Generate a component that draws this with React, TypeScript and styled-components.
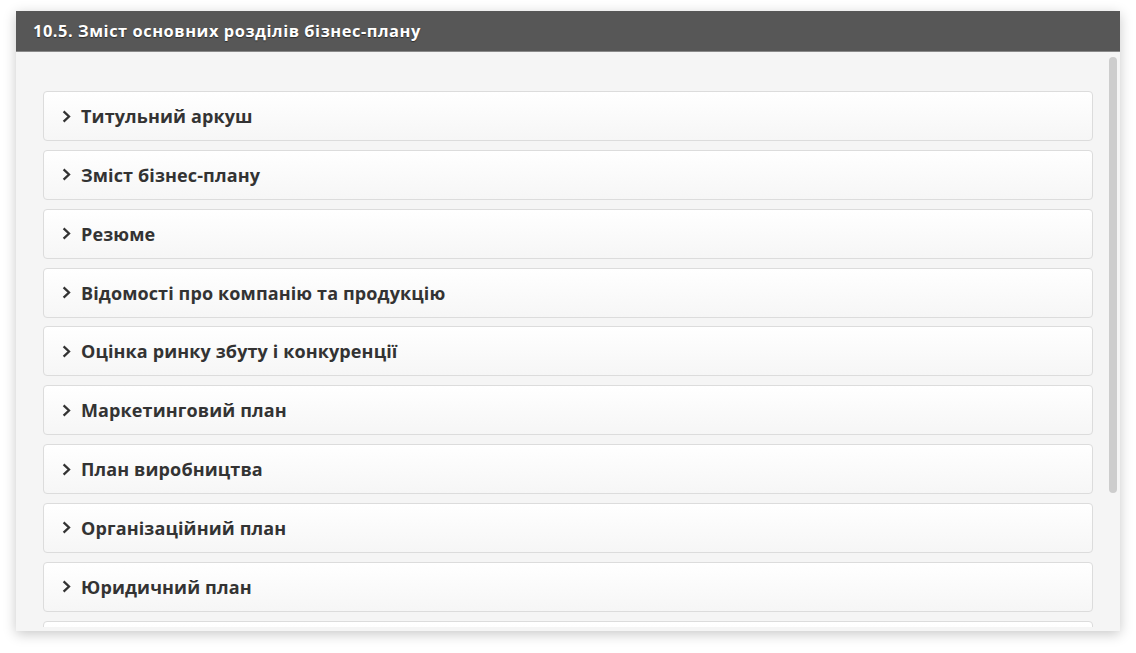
import React from "react";
import styled, { createGlobalStyle } from "styled-components";

const Global = createGlobalStyle`
  html, body { margin: 0; padding: 0; background: #ffffff; }
  body { font-family: "Open Sans", "Noto Sans", sans-serif; }
  * { box-sizing: border-box; }
`;

const Page = styled.div`
  width: 1136px;
  height: 653px;
  padding: 11px 16px 0 16px;
`;

const Panel = styled.section`
  width: 1104px;
  height: 620px;
  display: flex;
  flex-direction: column;
  background: #f5f5f5;
  box-shadow: 0 3px 12px rgba(0, 0, 0, 0.22);
`;

const Header = styled.header`
  height: 41px;
  flex: 0 0 41px;
  display: flex;
  align-items: center;
  padding: 0 17px 1px;
  background: #575757;
  border-bottom: 1px solid #8a8a8a;
  color: #ffffff;
  font-size: 16.4px;
  font-weight: 700;
  text-shadow: 0 1px 1px rgba(0, 0, 0, 0.5);
  letter-spacing: 0.55px;
  white-space: nowrap;
`;

const BodyFrame = styled.div`
  position: relative;
  flex: 1;
  min-height: 0;
  margin-bottom: 4px;
`;

const Body = styled.div`
  height: 100%;
  overflow-y: scroll;
  scrollbar-width: none;
  padding: 39px 27px 8px 27px;
  display: flex;
  flex-direction: column;
  gap: 8.85px;
  &::-webkit-scrollbar { display: none; }
`;

const Thumb = styled.div`
  position: absolute;
  top: 5px;
  right: 3px;
  width: 8px;
  height: 436px;
  border-radius: 4px;
  background: #cdcdcd;
`;

const Item = styled.div`
  flex: 0 0 50px;
  height: 50px;
  display: flex;
  align-items: center;
  gap: 10px;
  padding: 0 17px 0 18px;
  border: 1px solid #dcdcdc;
  border-radius: 4px;
  background: linear-gradient(#ffffff, #f6f6f6);
  color: #333333;
  font-size: 18px;
  font-weight: 700;
  letter-spacing: 0.12px;
  white-space: nowrap;
  cursor: pointer;
`;

const Chevron = styled.svg`
  width: 9px;
  height: 13px;
  flex: 0 0 9px;
`;

const items = [
  "Титульний аркуш",
  "Зміст бізнес-плану",
  "Резюме",
  "Відомості про компанію та продукцію",
  "Оцінка ринку збуту і конкуренції",
  "Маркетинговий план",
  "План виробництва",
  "Організаційний план",
  "Юридичний план",
  "Оцінка ризиків і страхування",
  "Фінансовий план",
  "Стратегія фінансування",
];

export default function App() {
  return (
    <>
      <Global />
      <Page>
        <Panel>
          <Header>10.5. Зміст основних розділів бізнес-плану</Header>
          <BodyFrame>
            <Body>
              {items.map((t) => (
                <Item key={t}>
                  <Chevron viewBox="0 0 9 13">
                    <path d="M1.6 1.4 L7 6.5 L1.6 11.6" fill="none" stroke="#333" strokeWidth="2.3" />
                  </Chevron>
                  <span>{t}</span>
                </Item>
              ))}
            </Body>
            <Thumb />
          </BodyFrame>
        </Panel>
      </Page>
    </>
  );
}
